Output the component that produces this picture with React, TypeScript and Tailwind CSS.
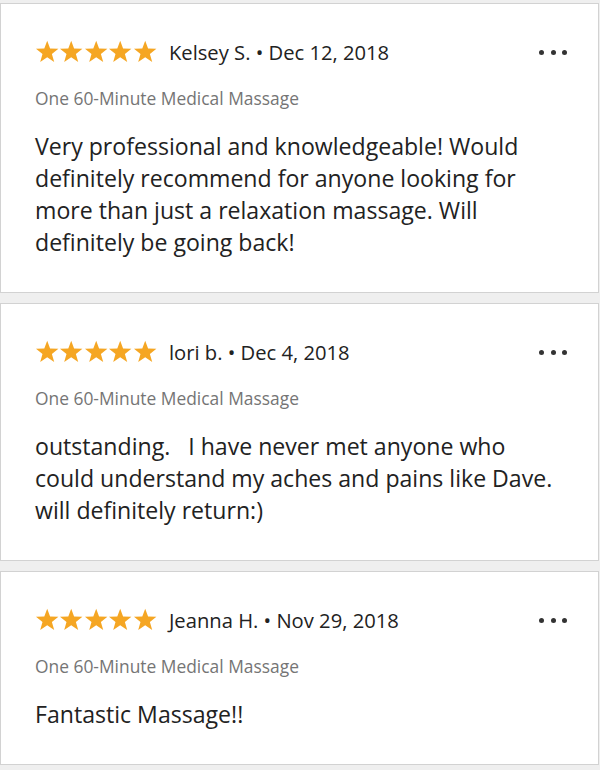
import React from "react";

type Review = {
  name: string;
  date: string;
  service: string;
  text: string;
};

const reviews: Review[] = [
  {
    name: "Kelsey S.",
    date: "Dec 12, 2018",
    service: "One 60-Minute Medical Massage",
    text: "Very professional and knowledgeable! Would definitely recommend for anyone looking for more than just a relaxation massage. Will definitely be going back!",
  },
  {
    name: "lori b.",
    date: "Dec 4, 2018",
    service: "One 60-Minute Medical Massage",
    text: "outstanding.   I have never met anyone who could understand my aches and pains like Dave.  will definitely return:)",
  },
  {
    name: "Jeanna H.",
    date: "Nov 29, 2018",
    service: "One 60-Minute Medical Massage",
    text: "Fantastic Massage!!",
  },
];

function Star() {
  return (
    <svg width="24.4" height="24" viewBox="0 0 24 24" className="shrink-0">
      <polygon
        fill="#f5a623"
        points="12,0.8 14.9,8.4 23.2,8.7 16.7,13.9 19,21.9 12,17.3 5,21.9 7.3,13.9 0.8,8.7 9.1,8.4"
      />
    </svg>
  );
}

function ReviewCard({ review }: { review: Review }) {
  return (
    <div className="bg-white border border-[#d2d2d2] mr-px pt-[34px] pb-[34px] pl-[34px] pr-[36px]">
      <div className="flex items-center h-[28px]">
        <div className="flex items-center">
          {[0, 1, 2, 3, 4].map((i) => (
            <Star key={i} />
          ))}
        </div>
        <div className="ml-[12px] text-[20.2px] text-[#222]">
          {review.name} • {review.date}
        </div>
        <div className="ml-auto flex items-center gap-[6.5px] -mr-[5px]">
          <span className="block w-[5px] h-[5px] rounded-full bg-[#333]" />
          <span className="block w-[5px] h-[5px] rounded-full bg-[#333]" />
          <span className="block w-[5px] h-[5px] rounded-full bg-[#333]" />
        </div>
      </div>
      <div className="mt-[20px] text-[17.4px] leading-[24px] text-[#757575]">
        {review.service}
      </div>
      <p className="mt-[20px] text-[23.1px] leading-[32px] text-[#222] whitespace-pre-wrap">
        {review.text}
      </p>
    </div>
  );
}

export default function App() {
  return (
    <div
      className="min-h-[770px] bg-[#efefef] pt-[3px] flex flex-col gap-[10px]"
      style={{ fontFamily: '"Open Sans", sans-serif' }}
    >
      {reviews.map((r) => (
        <ReviewCard key={r.name} review={r} />
      ))}
    </div>
  );
}
